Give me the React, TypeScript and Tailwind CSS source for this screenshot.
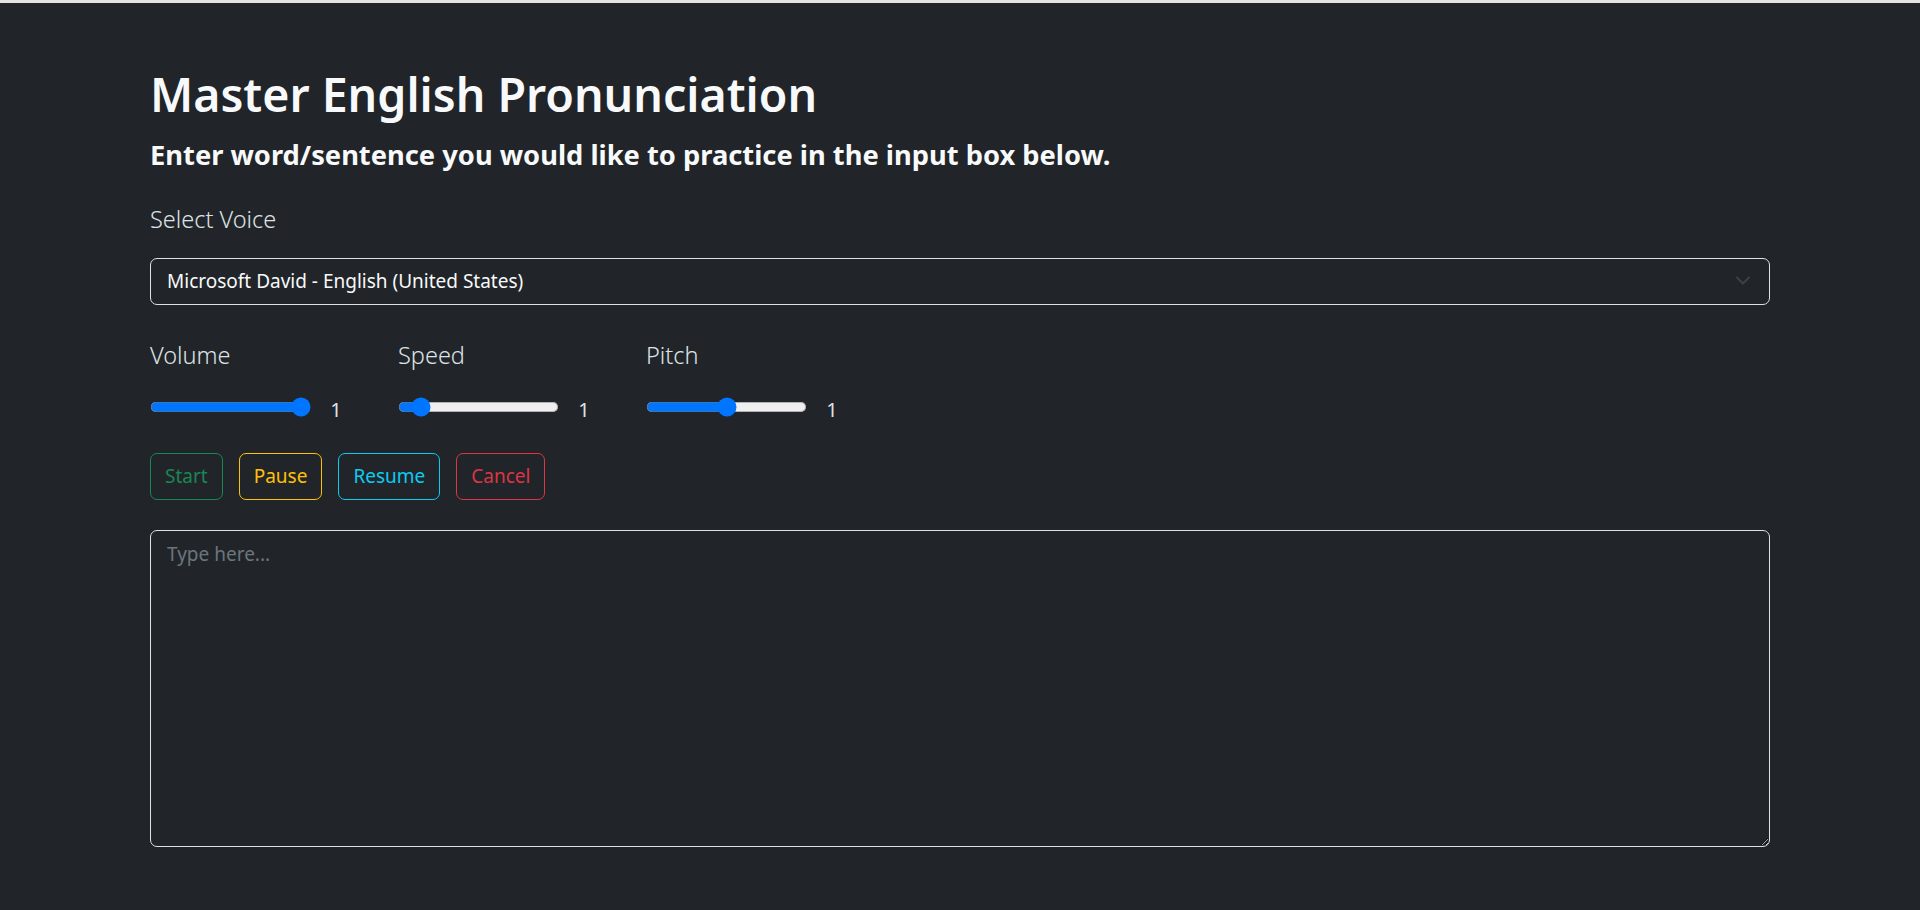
import React, { useState } from "react";

export default function App() {
  const [volume, setVolume] = useState(1);
  const [speed, setSpeed] = useState(1);
  const [pitch, setPitch] = useState(1);
  const font = { fontFamily: '"Noto Sans", "Open Sans", sans-serif' };

  const Slider = ({
    label,
    min,
    max,
    step,
    value,
    onChange,
  }: {
    label: string;
    min: number;
    max: number;
    step: number;
    value: number;
    onChange: (v: number) => void;
  }) => (
    <div className="w-[248px] flex flex-col">
      <div className="text-[23.5px] font-light leading-[37px] text-[#dee2e6]">{label}</div>
      <div className="flex items-center mt-[14px]">
        <input
          type="range"
          min={min}
          max={max}
          step={step}
          value={value}
          onChange={(e) => onChange(Number(e.target.value))}
          className="[zoom:1.25] [color-scheme:light] m-0"
        />
        <span className="ml-[19px] text-[20px] leading-[30px] text-[#dee2e6] mt-[7px]">1</span>
      </div>
    </div>
  );

  return (
    <div className="min-h-[910px] w-full bg-[#212529] text-[#dee2e6]" style={font}>
      <div className="h-[3px] bg-[#e3e3e3]" />
      <div className="mx-auto w-[1620px] pt-[61px]">
        <h1 className="text-[46.5px] font-semibold leading-[60px] text-[#f8f9fa] mb-[13px]">
          Master English Pronunciation
        </h1>
        <h4 className="text-[27.3px] font-bold leading-[36px] text-[#f8f9fa]">
          Enter word/sentence you would like to practice in the input box below.
        </h4>
        <div className="mt-[28px] text-[23.5px] font-light leading-[37px]">Select Voice</div>
        <div className="relative mt-[20px] h-[47px] rounded-[7px] border border-[#dee2e6] flex items-center pl-[16px]">
          <span className="text-[19px] text-[#f8f9fa]">Microsoft David - English (United States)</span>
          <svg
            className="absolute right-[19px] top-[17px]"
            width="14"
            height="9"
            viewBox="0 0 14 9"
            fill="none"
          >
            <path d="M1 1.5l6 6 6-6" stroke="#3b4148" strokeWidth="2" strokeLinecap="round" strokeLinejoin="round" />
          </svg>
        </div>
        <div className="flex mt-[32px]">
          <Slider label="Volume" min={0} max={1} step={0.1} value={volume} onChange={setVolume} />
          <Slider label="Speed" min={0.1} max={10} step={0.1} value={speed} onChange={setSpeed} />
          <Slider label="Pitch" min={0} max={2} step={0.1} value={pitch} onChange={setPitch} />
        </div>
        <div className="flex gap-[16px] mt-[28px]">
          <button className="h-[47px] px-[14px] rounded-[7px] border border-[#198754] text-[19px] text-[#198754]">
            Start
          </button>
          <button className="h-[47px] px-[14px] rounded-[7px] border border-[#ffc107] text-[19px] text-[#ffc107]">
            Pause
          </button>
          <button className="h-[47px] px-[14px] rounded-[7px] border border-[#0dcaf0] text-[19px] text-[#0dcaf0]">
            Resume
          </button>
          <button className="h-[47px] px-[14px] rounded-[7px] border border-[#dc3545] text-[19px] text-[#dc3545]">
            Cancel
          </button>
        </div>
        <textarea
          placeholder="Type here..."
          className="mt-[30px] block w-full h-[317px] rounded-[7px] border border-[#dee2e6] bg-[#212529] px-[16px] py-[9px] text-[19px] text-[#f8f9fa] placeholder:text-[#6c757d] outline-none"
        />
      </div>
    </div>
  );
}
